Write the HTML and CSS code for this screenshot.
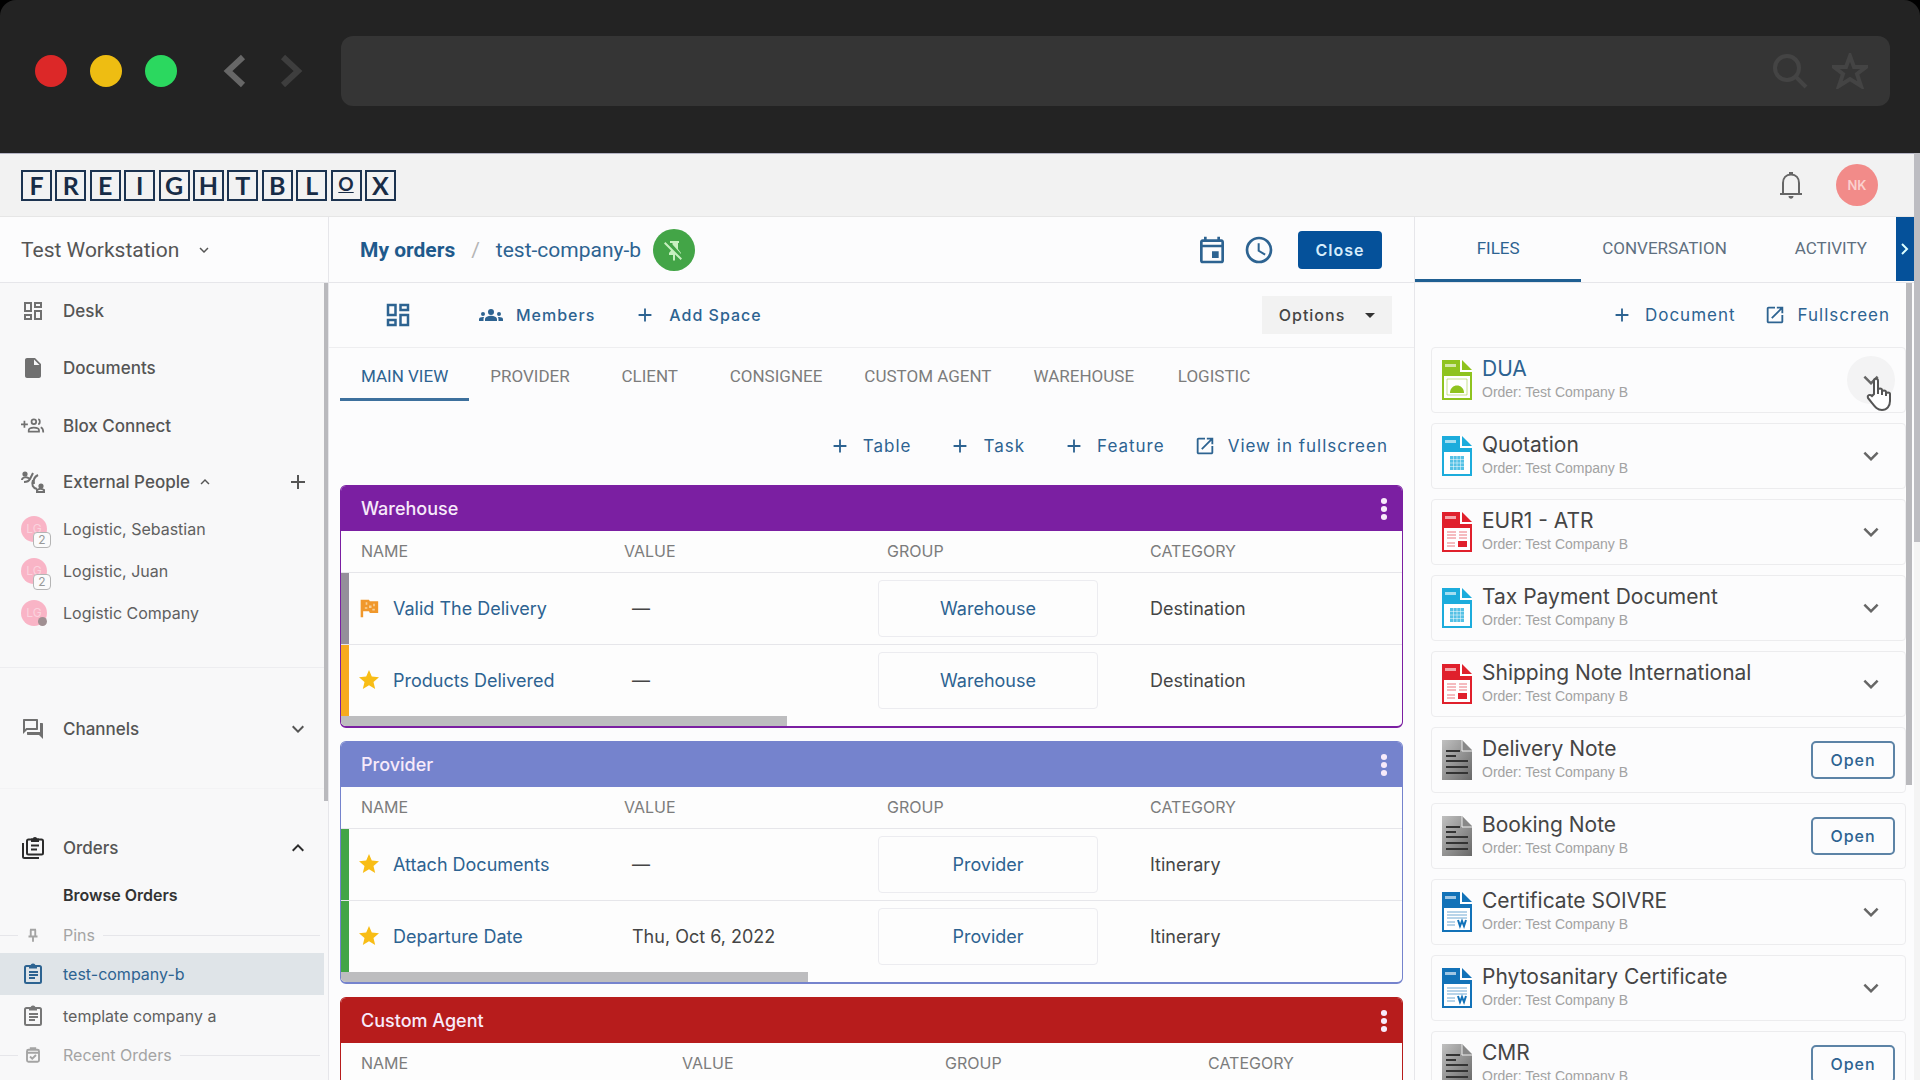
FILE: index.html
```html
<!DOCTYPE html>
<html lang="en">
<head>
<meta charset="utf-8">
<title>Freightblox</title>
<link rel="stylesheet" href="styles.css">
</head>
<body>
<svg class="sprite" aria-hidden="true">
  <symbol id="dashboard" viewBox="0 0 24 24"><path d="M19 5v2h-4V5h4M9 5v6H5V5h4m10 8v6h-4v-6h4M9 17v2H5v-2h4M21 3h-8v6h8V3zM11 3H3v10h8V3zm10 8h-8v10h8V11zm-10 4H3v6h8v-6z"/></symbol>
  <symbol id="file" viewBox="0 0 24 24"><path d="M14 2H6c-1.1 0-2 .9-2 2v16c0 1.100.9 2 2 2h12c1.100 0 2-.9 2-2V8l-6-6zm-1 7V3.500L18.500 9H13z"/></symbol>
  <symbol id="group-add" viewBox="0 0 28 24"><g fill="none" stroke="currentColor" stroke-width="2"><path d="M0 10h8M4 6v8"/><circle cx="15" cy="7" r="2.700"/><path d="M9 18.500v-1.500c0-2 3-3.200 6-3.200s6 1.200 6 3.200v1.500zM20 4.300c2.600 0 2.600 5.400 0 5.400M23 13.500c2 .8 3 2 3 6"/></g></symbol>
  <symbol id="external" viewBox="0 0 24 24"><g fill="none" stroke="currentColor" stroke-width="2"><circle cx="4" cy="4" r="1.600" fill="currentColor"/><path d="M1 10c0-3 5-3.500 7-1.500M12 3l-3 6c-1 2-3 3-6 3M17 5c-4 2-5 5-4 9M12 10c-2 5 0 8 4 9"/><circle cx="20" cy="16" r="1.600" fill="currentColor"/><path d="M16 22h7v-2c-2-1.500-5-1.500-7 0z"/></g></symbol>
  <symbol id="plus" viewBox="0 0 24 24"><path d="M19 13h-6v6h-2v-6H5v-2h6V5h2v6h6v2z"/></symbol>
  <symbol id="chevron-down" viewBox="0 0 24 24"><path d="M7.400 8.600L12 13.200l4.600-4.600L18 10l-6 6-6-6z"/></symbol>
  <symbol id="chevron-up" viewBox="0 0 24 24"><path d="M12 8l-6 6 1.400 1.400 4.600-4.600 4.600 4.600L18 14z"/></symbol>
  <symbol id="forum" viewBox="0 0 24 24"><path d="M15 4v7H5.200L4 12.200V4h11m1-2H3c-.6 0-1 .4-1 1v14l4-4h10c.6 0 1-.4 1-1V3c0-.6-.4-1-1-1zm5 4h-2v9H6v2c0 .6.400 1 1 1h11l4 4V7c0-.6-.4-1-1-1z"/></symbol>
  <symbol id="orders" viewBox="0 0 24 24"><g fill="none" stroke="currentColor" stroke-width="2"><rect x="6" y="3.500" width="16" height="15" rx="1.500"/><path d="M2 7v13.500c0 1 .6 1.500 1.500 1.500H18M10 9.500h8M10 13.500h6"/><path d="M11 5V3.500h1.500a1.500 1.500 0 0 1 3 0H17V5z" fill="currentColor"/></g></symbol>
  <symbol id="clipboard" viewBox="0 0 24 24"><g fill="none" stroke="currentColor" stroke-width="2"><rect x="4" y="4" width="16" height="17" rx="1.500"/><path d="M8 10h9M8 13h9M8 16h6"/><path d="M9 5.500V4h1.500a1.500 1.500 0 0 1 3 0H15v1.500z" fill="currentColor"/></g></symbol>
  <symbol id="recent" viewBox="0 0 24 24"><g fill="none" stroke="currentColor" stroke-width="2.500"><rect x="4" y="5" width="16" height="16" rx="2"/><path d="M4 9h16M9 5V3h6v2M8 14l3 3 5-5"/></g></symbol>
  <symbol id="pin" viewBox="0 0 24 24"><path fill="none" stroke="currentColor" stroke-width="2.500" d="M8 5h8M9 5v8M15 5v8M6 14h12M12 14v7"/></symbol>
  <symbol id="pin-off" viewBox="0 0 24 24"><path d="M8 3h9v2h-1v6l3 4v1l-8.500-9.500V5H8zM3.400 4L2 5.400l7 7L7 15v2h4v5l1 1 1-1v-5.500l5.600 5.500 1.400-1.400z"/></symbol>
  <symbol id="event" viewBox="0 0 24 24"><path d="M19 4h-1V2h-2v2H8V2H6v2H5c-1.100 0-2 .9-2 2v14c0 1.100.9 2 2 2h14c1.100 0 2-.9 2-2V6c0-1.100-.9-2-2-2zm0 16H5V10h14v10zm0-12H5V6h14v2zm-7 5h5v5h-5z"/></symbol>
  <symbol id="clock" viewBox="0 0 24 24"><path d="M12 2a10 10 0 1 0 0 20 10 10 0 0 0 0-20zm0 18a8 8 0 1 1 0-16 8 8 0 0 1 0 16zm.5-13H11v6l5.200 3.100.8-1.200-4.500-2.700z"/></symbol>
  <symbol id="groups" viewBox="0 0 24 24"><path d="M4 13a2 2 0 1 0 0-4 2 2 0 0 0 0 4zm1.100 1.100C4.800 14 4.400 14 4 14c-1 0-1.900.2-2.800.6C.5 14.900 0 15.600 0 16.400V18h4.500v-1.600c0-.8.200-1.600.6-2.300zM20 13a2 2 0 1 0 0-4 2 2 0 0 0 0 4zm4 3.400c0-.8-.5-1.500-1.200-1.800-.9-.4-1.800-.6-2.800-.6-.4 0-.8 0-1.100.1.400.7.600 1.500.6 2.300V18H24zM16.200 13.700c-1.200-.5-2.600-1-4.200-1s-3 .4-4.200 1C6.700 14.100 6 15.200 6 16.400V18h12v-1.600c0-1.200-.7-2.300-1.800-2.700zM9 9a3 3 0 1 0 6 0 3 3 0 0 0-6 0z"/></symbol>
  <symbol id="open-new" viewBox="0 0 24 24"><path d="M19 19H5V5h7V3H5c-1.100 0-2 .9-2 2v14c0 1.100.9 2 2 2h14c1.100 0 2-.9 2-2v-7h-2v7zM14 3v2h3.600l-9.800 9.800 1.400 1.400L19 6.400V10h2V3h-7z"/></symbol>
  <symbol id="kebab" viewBox="0 0 24 24"><circle cx="12" cy="6" r="2.300"/><circle cx="12" cy="12" r="2.300"/><circle cx="12" cy="18" r="2.300"/></symbol>
  <symbol id="star" viewBox="0 0 24 24"><path d="M12 17.300L18.200 21l-1.700-7L22 9.200l-7.200-.6L12 2 9.200 8.600 2 9.200 7.500 14l-1.700 7z"/></symbol>
  <symbol id="flag" viewBox="0 0 24 24"><path d="M2 2h10l1 2h10v14H13l-1-2H5v7H2z"/><path d="M8 5h2v3H8zm4 4h3v3h-3zm5-2h2v3h-2zM7 11h3v2H7zm9 2h3v2h-3z" fill="#f8cf96"/></symbol>
  <symbol id="bell" viewBox="0 0 24 28"><g fill="none" stroke="currentColor" stroke-width="2"><path d="M1 23h22M4 23V12c0-5 3-8.500 8-8.500s8 3.500 8 8.500v11"/></g><path d="M10 1h4v3h-4zM9.500 25h5c0 3.500-5 3.500-5 0z"/></symbol>
  <symbol id="doc-sheet" viewBox="0 0 30 40"><path d="M0 0h20l10 10v6H0z"/><path d="M19 0v11h11" fill="none" stroke="#fff" stroke-width="2"/><path d="M3 4h11v3H3z" fill="#fff" opacity=".6"/><path d="M1 15h28v24H1z" fill="#fff" stroke="currentColor" stroke-width="2"/></symbol>
  <symbol id="doc-image" viewBox="0 0 30 40"><use href="#doc-sheet"/><path d="M5 19h20v16H5z" fill="none" stroke="currentColor" opacity=".5"/><path d="M8 33c0-10 14-10 14 0z"/></symbol>
  <symbol id="doc-grid" viewBox="0 0 30 40"><use href="#doc-sheet"/><path d="M8 20h14v14H8z" opacity=".75"/><path d="M11.500 20v14M15 20v14M18.500 20v14M8 23.500h14M8 27h14M8 30.500h14" stroke="#fff" stroke-width=".5"/></symbol>
  <symbol id="doc-pdf" viewBox="0 0 30 40"><use href="#doc-sheet"/><path d="M5 20h9M5 23h9M5 26h9M17 20h8M17 23h8M17 26h8M5 31h8M5 34h8" stroke="currentColor" opacity=".6"/><path d="M16 29h9v6h-9z"/></symbol>
  <symbol id="doc-word" viewBox="0 0 30 40"><use href="#doc-sheet"/><path d="M5 20h20M5 23h20M5 26h20M5 30h8M5 33h8" stroke="currentColor" opacity=".6"/><path fill="none" stroke="currentColor" stroke-width="2" d="M16 28l2 6 2-5 2 5 2-6"/></symbol>
  <linearGradient id="sheet-grey" x2="1" y2="1"><stop offset="0" stop-color="#c0c0c0"/><stop offset="1" stop-color="#686868"/></linearGradient>
  <symbol id="doc-text" viewBox="0 0 30 40"><path d="M0 0h20l10 10v30H0z" fill="url(#sheet-grey)"/><path d="M20 0v11h10z" fill="#888"/><path d="M20 0v11h10" fill="none" stroke="#eee"/><path d="M4 11h14M4 16h10M4 21h22M4 27h22M4 33h22" stroke="#333" stroke-width="2"/></symbol>
</svg>

<header class="chrome">
  <div class="lights"><i class="light red"></i><i class="light amber"></i><i class="light green"></i></div>
  <div class="nav-arrows">
    <button class="arrow" aria-label="Back"><svg viewBox="0 0 24 34"><path d="M20 3L5 17l15 14"/></svg></button>
    <button class="arrow dim" aria-label="Forward"><svg viewBox="0 0 24 34"><path d="M4 3l15 14L4 31"/></svg></button>
  </div>
  <div class="address">
    <input class="address-input" type="text" aria-label="Address">
    <svg class="address-icon" viewBox="0 0 36 36"><circle cx="15" cy="15" r="12"/><path d="M24 24l10 10"/></svg>
    <svg class="address-icon" viewBox="0 0 36 36"><path d="M18 3l4 11h12l-9 7 4 12-11-7-11 7 4-12-9-7h12z"/></svg>
  </div>
</header>

<div class="viewport">
  <div class="app">
    <header class="topbar">
      <a class="logo" href="#" aria-label="Freightblox"><span>F</span><span>R</span><span>E</span><span>I</span><span>G</span><span>H</span><span>T</span><span>B</span><span>L</span><span class="logo-o"><u>O</u></span><span>X</span></a>
      <div class="account">
        <button class="bell" aria-label="Notifications"><svg><use href="#bell"/></svg></button>
        <button class="avatar-me">NK</button>
      </div>
    </header>

    <div class="columns">
      <aside class="sidebar">
        <button class="workspace">Test Workstation <svg class="icon-s"><use href="#chevron-down"/></svg></button>
        <nav class="side-body">
          <a class="side-item" href="#"><svg class="icon"><use href="#dashboard"/></svg>Desk</a>
          <a class="side-item" href="#"><svg class="icon"><use href="#file"/></svg>Documents</a>
          <a class="side-item" href="#"><svg class="icon"><use href="#group-add"/></svg>Blox Connect</a>
          <div class="side-item people-head"><svg class="icon"><use href="#external"/></svg>External People <svg class="icon-s"><use href="#chevron-up"/></svg><button class="side-action" aria-label="Add person"><svg class="icon"><use href="#plus"/></svg></button></div>
          <ul class="people">
            <li><a class="side-link" href="#"><span class="person">LG<b class="count">2</b></span>Logistic, Sebastian</a></li>
            <li><a class="side-link" href="#"><span class="person">LG<b class="count">2</b></span>Logistic, Juan</a></li>
            <li><a class="side-link" href="#"><span class="person">LG<b class="offline"></b></span>Logistic Company</a></li>
          </ul>
          <section class="side-section channels">
            <div class="side-item"><svg class="icon"><use href="#forum"/></svg>Channels<button class="side-action" aria-label="Expand channels"><svg class="icon"><use href="#chevron-down"/></svg></button></div>
          </section>
          <section class="side-section orders">
            <div class="side-item strong-icons"><svg class="icon"><use href="#orders"/></svg>Orders<button class="side-action" aria-label="Collapse orders"><svg class="icon"><use href="#chevron-up"/></svg></button></div>
            <a class="browse" href="#">Browse Orders</a>
            <div class="side-label"><svg class="icon-s"><use href="#pin"/></svg><span>Pins</span></div>
            <a class="side-link selected" href="#"><svg class="icon"><use href="#clipboard"/></svg>test-company-b</a>
            <a class="side-link" href="#"><svg class="icon"><use href="#clipboard"/></svg>template company a</a>
            <div class="side-label"><svg class="icon-s"><use href="#recent"/></svg><span>Recent Orders</span></div>
          </section>
          <i class="scroll-thumb side-thumb"></i>
        </nav>
      </aside>

      <main class="main">
        <div class="main-head">
          <nav class="crumbs"><a class="crumb-root" href="#">My orders</a><span class="slash">/</span><a href="#">test-company-b</a></nav>
          <button class="unpin" aria-label="Unpin"><svg class="icon"><use href="#pin-off"/></svg></button>
          <div class="head-actions">
            <button aria-label="Calendar"><svg class="icon-l"><use href="#event"/></svg></button>
            <button aria-label="History"><svg class="icon-l"><use href="#clock"/></svg></button>
            <button class="close">Close</button>
          </div>
        </div>
        <div class="toolbar">
          <button class="grid-toggle" aria-label="Dashboard"><svg class="icon-m"><use href="#dashboard"/></svg></button>
          <button class="text-btn"><svg class="icon"><use href="#groups"/></svg>Members</button>
          <button class="text-btn"><svg class="icon-p"><use href="#plus"/></svg>Add Space</button>
          <button class="options">Options <i class="caret"></i></button>
        </div>
        <div class="tabs" role="tablist">
          <button role="tab" class="tab active">MAIN VIEW</button>
          <button role="tab" class="tab">PROVIDER</button>
          <button role="tab" class="tab">CLIENT</button>
          <button role="tab" class="tab">CONSIGNEE</button>
          <button role="tab" class="tab">CUSTOM AGENT</button>
          <button role="tab" class="tab">WAREHOUSE</button>
          <button role="tab" class="tab">LOGISTIC</button>
        </div>
        <div class="view-actions">
          <button class="text-btn"><svg class="icon-p"><use href="#plus"/></svg>Table</button>
          <button class="text-btn"><svg class="icon-p"><use href="#plus"/></svg>Task</button>
          <button class="text-btn"><svg class="icon-p"><use href="#plus"/></svg>Feature</button>
          <button class="text-btn tight"><svg class="icon-p"><use href="#open-new"/></svg>View in fullscreen</button>
        </div>

        <div class="boards">
          <section class="board purple">
            <header class="board-head"><h2>Warehouse</h2><button aria-label="Warehouse menu"><svg class="icon-l"><use href="#kebab"/></svg></button></header>
            <div class="board-scroll">
              <table class="grid">
                <thead><tr><th class="c-name">NAME</th><th>VALUE</th><th>GROUP</th><th>CATEGORY</th></tr></thead>
                <tbody>
                  <tr class="st-grey"><td><a class="task" href="#"><svg class="icon flag"><use href="#flag"/></svg>Valid The Delivery</a></td><td class="value">—</td><td><button class="group">Warehouse</button></td><td>Destination</td></tr>
                  <tr class="st-amber"><td><a class="task" href="#"><svg class="icon star"><use href="#star"/></svg>Products Delivered</a></td><td class="value">—</td><td><button class="group">Warehouse</button></td><td>Destination</td></tr>
                </tbody>
              </table>
            </div>
            <i class="hbar" style="width:42%"></i>
          </section>
          <section class="board blue">
            <header class="board-head"><h2>Provider</h2><button aria-label="Provider menu"><svg class="icon-l"><use href="#kebab"/></svg></button></header>
            <div class="board-scroll">
              <table class="grid">
                <thead><tr><th class="c-name">NAME</th><th>VALUE</th><th>GROUP</th><th>CATEGORY</th></tr></thead>
                <tbody>
                  <tr class="st-green"><td><a class="task" href="#"><svg class="icon star"><use href="#star"/></svg>Attach Documents</a></td><td class="value">—</td><td><button class="group">Provider</button></td><td>Itinerary</td></tr>
                  <tr class="st-green"><td><a class="task" href="#"><svg class="icon star"><use href="#star"/></svg>Departure Date</a></td><td class="value">Thu, Oct 6, 2022</td><td><button class="group">Provider</button></td><td>Itinerary</td></tr>
                </tbody>
              </table>
            </div>
            <i class="hbar" style="width:44%"></i>
          </section>
          <section class="board red-board">
            <header class="board-head"><h2>Custom Agent</h2><button aria-label="Custom Agent menu"><svg class="icon-l"><use href="#kebab"/></svg></button></header>
            <div class="board-scroll">
              <table class="grid">
                <thead><tr><th class="c-name wide">NAME</th><th>VALUE</th><th>GROUP</th><th>CATEGORY</th></tr></thead>
              </table>
            </div>
          </section>
        </div>
      </main>

      <aside class="panel">
        <div class="panel-tabs" role="tablist">
          <button role="tab" class="ptab active">FILES</button>
          <button role="tab" class="ptab">CONVERSATION</button>
          <button role="tab" class="ptab">ACTIVITY</button>
          <button class="collapse" aria-label="Collapse panel"><svg viewBox="0 0 10 14"><path d="M2 2l5 5-5 5"/></svg></button>
        </div>
        <div class="panel-body">
          <div class="panel-actions">
            <button class="text-btn"><svg class="icon-p"><use href="#plus"/></svg>Document</button>
            <button class="text-btn tight"><svg class="icon-p"><use href="#open-new"/></svg>Fullscreen</button>
          </div>
          <ul class="files">
            <li class="file hovered"><svg class="doc lime"><use href="#doc-image"/></svg><div class="file-text"><h3>DUA</h3><p>Order: Test Company B</p></div><button class="expand hover" aria-label="Expand"><svg class="icon-m"><use href="#chevron-down"/></svg><svg class="pointer" viewBox="0 0 30 34"><path d="M9 17V4c0-3 4-3 4 0v9c0-2 4-2 4 0v2c0-2 4-2 4 0v2c0-2 4-2 4 0v7c0 5-3 9-8 9-6 0-8-5-14-12-1-3 2-4 4-2z"/><path d="M13 13v4M17 14v4M21 15v4"/></svg></button></li>
            <li class="file"><svg class="doc cyan"><use href="#doc-grid"/></svg><div class="file-text"><h3>Quotation</h3><p>Order: Test Company B</p></div><button class="expand" aria-label="Expand"><svg class="icon-m"><use href="#chevron-down"/></svg></button></li>
            <li class="file"><svg class="doc pdf"><use href="#doc-pdf"/></svg><div class="file-text"><h3>EUR1 - ATR</h3><p>Order: Test Company B</p></div><button class="expand" aria-label="Expand"><svg class="icon-m"><use href="#chevron-down"/></svg></button></li>
            <li class="file"><svg class="doc cyan"><use href="#doc-grid"/></svg><div class="file-text"><h3>Tax Payment Document</h3><p>Order: Test Company B</p></div><button class="expand" aria-label="Expand"><svg class="icon-m"><use href="#chevron-down"/></svg></button></li>
            <li class="file"><svg class="doc pdf"><use href="#doc-pdf"/></svg><div class="file-text"><h3>Shipping Note International</h3><p>Order: Test Company B</p></div><button class="expand" aria-label="Expand"><svg class="icon-m"><use href="#chevron-down"/></svg></button></li>
            <li class="file"><svg class="doc"><use href="#doc-text"/></svg><div class="file-text"><h3>Delivery Note</h3><p>Order: Test Company B</p></div><button class="open">Open</button></li>
            <li class="file"><svg class="doc"><use href="#doc-text"/></svg><div class="file-text"><h3>Booking Note</h3><p>Order: Test Company B</p></div><button class="open">Open</button></li>
            <li class="file"><svg class="doc word"><use href="#doc-word"/></svg><div class="file-text"><h3>Certificate SOIVRE</h3><p>Order: Test Company B</p></div><button class="expand" aria-label="Expand"><svg class="icon-m"><use href="#chevron-down"/></svg></button></li>
            <li class="file"><svg class="doc word"><use href="#doc-word"/></svg><div class="file-text"><h3>Phytosanitary Certificate</h3><p>Order: Test Company B</p></div><button class="expand" aria-label="Expand"><svg class="icon-m"><use href="#chevron-down"/></svg></button></li>
            <li class="file"><svg class="doc"><use href="#doc-text"/></svg><div class="file-text"><h3>CMR</h3><p>Order: Test Company B</p></div><button class="open">Open</button></li>
          </ul>
          <i class="scroll-thumb panel-thumb"></i>
        </div>
      </aside>
    </div>
  </div>
  <div class="page-scroll"><i></i></div>
</div>
</body>
</html>
```
FILE: styles.css
```css
:root {
  --blue: #2d6391;
  --ink: #454545;
  --muted: #7c7c7c;
  --line: #e6e6ea;
  --paper: #fcfcfd;
}
* { box-sizing: border-box; }
body {
  margin: 0;
  height: 100vh;
  display: flex;
  flex-direction: column;
  overflow: hidden;
  background: #000;
  color: var(--ink);
  font-family: Inter, "Liberation Sans", sans-serif;
  font-size: 16px;
}
button, input { font: inherit; color: inherit; border: 0; background: none; padding: 0; margin: 0; }
a { color: inherit; text-decoration: none; }
ul { list-style: none; margin: 0; padding: 0; }
h2, h3, p { margin: 0; font-weight: 400; }
svg { fill: currentColor; display: block; flex: none; }
button { display: flex; align-items: center; justify-content: center; }
.sprite { position: absolute; width: 0; height: 0; }
.icon { width: 24px; height: 24px; }
.icon-s { width: 18px; height: 18px; }
.icon-p { width: 22px; height: 22px; }
.icon-m { width: 30px; height: 30px; }
.icon-l { width: 32px; height: 32px; }

/* Browser frame */
.chrome {
  flex: none;
  display: flex;
  align-items: center;
  height: 153px;
  padding: 0 30px 12px 35px;
  background: #232323;
  border-radius: 16px 16px 0 0;
}
.lights { display: flex; gap: 23px; }
.light { width: 32px; height: 32px; border-radius: 50%; }
.red { background: #dc2828; }
.amber { background: #eebd12; }
.green { background: #2bd85f; }
.nav-arrows { display: flex; gap: 32px; margin: 0 38px 0 46px; }
.arrow { color: #676767; }
.arrow.dim { color: #3e3e3e; }
.arrow svg { width: 24px; height: 34px; fill: none; stroke: currentColor; stroke-width: 6; }
.address {
  flex: 1;
  display: flex;
  align-items: center;
  gap: 24px;
  height: 70px;
  padding: 0 22px;
  border-radius: 12px;
  background: #353535;
}
.address-input { flex: 1; min-width: 0; height: 100%; color: #ccc; }
.address-icon { width: 36px; height: 36px; fill: none; stroke: #444; stroke-width: 4; }

/* App shell */
.viewport { flex: 1; min-height: 0; display: flex; }
.app { flex: 1; min-width: 0; display: flex; flex-direction: column; background: var(--paper); }
.page-scroll { width: 6px; background: #f4f4f4; }
.page-scroll i { display: block; height: 42%; background: #bdbdc2; }
.topbar {
  flex: none;
  display: flex;
  align-items: center;
  justify-content: space-between;
  height: 64px;
  padding: 0 36px 0 21px;
  background: #f2f2f2;
  border-top: 1px solid #b4b4c4;
  border-bottom: 1px solid #e6e6e6;
}
.logo { display: flex; justify-content: space-between; width: 375px; }
.logo span {
  width: 31px;
  height: 31px;
  border: 2px solid #1c3350;
  color: #182c46;
  font: 700 25px/27px Lato, sans-serif;
  text-align: center;
}
.logo .logo-o { font-size: 19px; line-height: 23px; }
.account { display: flex; align-items: center; gap: 33px; }
.bell svg { width: 24px; height: 28px; color: #666; }
.avatar-me {
  width: 42px;
  height: 42px;
  border-radius: 50%;
  background: #f28b89;
  color: #fbd0ce;
  font-size: 13px;
  font-weight: 600;
}
.columns { flex: 1; min-height: 0; display: flex; }

/* Sidebar */
.sidebar { width: 329px; flex: none; display: flex; flex-direction: column; border-right: 1px solid var(--line); }
.workspace {
  flex: none;
  justify-content: flex-start;
  gap: 16px;
  height: 66px;
  padding: 0 21px;
  border-bottom: 1px solid var(--line);
  font: 400 21px/26px Roboto, sans-serif;
  color: #555;
}
.side-body { position: relative; flex: 1; min-height: 0; overflow: hidden; background: #f8f8f9; }
.side-item { display: flex; align-items: center; height: 58px; padding: 0 18px 0 21px; font-size: 17px; font-weight: 500; color: #555; }
.side-body > .side-item:first-child { height: 56px; }
.side-item > .icon { margin-right: 18px; color: #707070; }
.side-item > .icon-s { margin-left: 6px; }
.side-action { margin-left: auto; }
.side-body > .people-head { height: 53px; }
.side-link { display: flex; align-items: center; height: 42px; padding-left: 21px; font-size: 16px; color: #606060; }
.side-link > .icon { margin-right: 18px; color: #777; }
.people { padding-bottom: 33px; }
.person {
  position: relative;
  width: 26px;
  height: 26px;
  margin-right: 16px;
  border-radius: 50%;
  background: #f9b4c6;
  color: #fbd3de;
  font-size: 12px;
  line-height: 26px;
  text-align: center;
}
.count {
  position: absolute;
  left: 12px;
  top: 16px;
  width: 18px;
  height: 16px;
  border: 1px solid #b5b5b5;
  border-radius: 4px;
  background: #fbfbfb;
  color: #999;
  font-size: 12px;
  font-weight: 400;
  line-height: 14px;
}
.offline { position: absolute; right: 0; bottom: 0; width: 9px; height: 9px; border-radius: 50%; background: #a08f92; }
.side-section { border-top: 1px solid #ededf0; }
.channels { padding: 32px 0 30px; }
.orders { padding-top: 34px; border-color: #f3f3f5; }
.orders .side-item { height: 50px; }
.strong-icons svg, .side-item.strong-icons > .icon { color: #2c2c2c; }
.browse { display: flex; align-items: center; height: 44px; padding-left: 63px; font-size: 16px; font-weight: 600; color: #333; }
.side-label { display: flex; align-items: center; height: 36px; font-size: 16px; color: #a4a4a4; }
.side-label::before { content: ""; width: 18px; height: 1px; margin-right: 6px; background: var(--line); }
.side-label::after { content: ""; flex: 1; height: 1px; margin: 0 8px; background: var(--line); }
.side-label span { margin-left: 21px; }
.selected, .selected > .icon { color: var(--blue); }
.selected { background: #dfe4e8; margin-right: 4px; }
.scroll-thumb { position: absolute; right: 0; top: 0; background: #b9b9bd; }
.side-thumb { width: 4px; height: 65%; }

/* Main column */
.main { flex: 1; min-width: 0; display: flex; flex-direction: column; }
.main-head { flex: none; display: flex; align-items: center; height: 66px; padding: 0 32px 0 31px; border-bottom: 1px solid var(--line); color: var(--blue); }
.crumbs { display: flex; gap: 16px; font: 400 21px/26px Roboto, sans-serif; }
.crumb-root { font-weight: 700; color: #1f5a8c; }
.slash { color: #b5b5b5; }
.unpin { width: 42px; height: 42px; margin-left: 12px; border-radius: 50%; background: #43a547; color: #c8f0c0; }
.head-actions { display: flex; align-items: center; gap: 15px; margin-left: auto; }
.close { width: 84px; height: 38px; margin-left: 8px; border-radius: 4px; background: #05519a; color: #d6ecfa; font-weight: 600; letter-spacing: 1px; }
.toolbar { flex: none; display: flex; align-items: center; height: 65px; padding: 0 22px 0 54px; border-bottom: 1px solid #eeeef0; }
.text-btn { gap: 12px; font-size: 17px; letter-spacing: 1px; color: var(--blue); }
.grid-toggle { margin-right: 66px; color: var(--blue); }
.toolbar .text-btn { gap: 13px; font-size: 16px; font-weight: 500; }
.toolbar .text-btn + .text-btn { margin-left: 39px; }
.options { gap: 20px; height: 38px; width: 130px; margin-left: auto; background: #f2f2f2; font-weight: 500; letter-spacing: 1px; }
.caret { border: 5px solid transparent; border-top-color: #333; border-bottom: 0; }
.tabs { flex: none; display: flex; height: 53px; padding-left: 11px; }
.tab { min-width: 118px; padding: 5px 21px 0; border-bottom: 3px solid transparent; font: 400 17px/20px Roboto, sans-serif; color: var(--muted); }
.tab.active { color: var(--blue); border-color: #3d709d; }
.view-actions { flex: none; display: flex; justify-content: flex-end; gap: 38px; padding: 34px 26px 28px; }
.view-actions .text-btn { height: 22px; }
.view-actions .tight { margin-left: -9px; }
.boards { display: flex; flex-direction: column; gap: 13px; padding: 0 11px; }
.board { --accent: #7b1fa2; flex: none; border: 1px solid var(--accent); border-bottom-width: 2px; border-radius: 6px; overflow: hidden; background: #fdfdfd; }
.blue { --accent: #7583cd; }
.red-board { --accent: #b71c1c; }
.board-head { display: flex; align-items: center; justify-content: space-between; height: 45px; padding: 0 2px 0 20px; background: var(--accent); color: #f7eafa; }
.board-head h2 { font-size: 18px; font-weight: 500; }
.board-scroll { overflow: hidden; }
.grid { width: 100%; table-layout: fixed; border-collapse: separate; border-spacing: 0; font-size: 18px; }
.grid th { width: 263px; height: 41px; padding: 0 9px 1px; font-size: 16px; font-weight: 400; color: var(--muted); text-align: left; }
.grid th.c-name { width: 274px; padding-left: 20px; }
.grid th.wide { width: 332px; }
.grid td { height: 72px; padding: 0 9px 1px; border-top: 1px solid var(--line); }
.grid td:first-child { padding-left: 10px; box-shadow: inset 8px 0 var(--status); }
.grid td:nth-child(3) { padding: 0; }
.st-grey { --status: #948f9a; }
.st-amber { --status: #f7ab1d; }
.st-green { --status: #43a547; }
.grid td.value { padding-left: 17px; }
.task { display: flex; align-items: center; gap: 12px; padding-left: 6px; color: var(--blue); }
.flag { color: #f0982c; width: 20px; height: 20px; margin: 0 2px; }
.star { color: #f8bd16; }
.group { width: 220px; height: 57px; border: 1px solid #ececf0; border-radius: 4px; color: var(--blue); }
.hbar { display: block; height: 10px; background: #bdbdbf; }

/* Files panel */
.panel { width: 500px; flex: none; display: flex; flex-direction: column; border-left: 1px solid var(--line); }
.panel-tabs { position: relative; flex: none; display: flex; height: 66px; border-bottom: 1px solid var(--line); }
.ptab { flex: 1 0 0; border-bottom: 3px solid transparent; font: 400 17px/20px Roboto, sans-serif; color: #5f7080; }
.ptab.active { border-color: #1f5f92; color: var(--blue); }
.collapse { position: absolute; right: 0; top: 0; width: 18px; height: 64px; background: #05519a; }
.collapse svg { width: 10px; height: 14px; fill: none; stroke: #dff; stroke-width: 2; }
.panel-body { position: relative; flex: 1; min-height: 0; overflow: hidden; padding: 0 8px 0 16px; }
.panel-thumb { width: 6px; height: 63%; right: 2px; }
.panel-actions { display: flex; align-items: center; justify-content: flex-end; gap: 28px; height: 64px; padding-right: 16px; }
.files { display: flex; flex-direction: column; gap: 10px; }
.file { display: flex; align-items: flex-start; height: 66px; padding: 8px 10px 0 10px; border: 1px solid #ececee; border-radius: 4px; }
.doc { width: 30px; height: 40px; margin: 4px 10px 0 0; }
.lime { color: #8fc31f; }
.cyan { color: #1cacdc; }
.pdf { color: #e0202c; }
.word { color: #1272b8; }
.file-text { flex: 1; min-width: 0; }
.file h3 { font-size: 21px; line-height: 25px; }
.file p { font: 400 14px/23px "Liberation Sans", sans-serif; color: #a2a2a2; }
.hovered h3 { color: var(--blue); }
.expand { position: relative; width: 48px; height: 48px; border-radius: 50%; color: #666; }
.expand.hover { background: #f3f3f4; }
.pointer { position: absolute; left: 18px; top: 20px; width: 30px; height: 36px; fill: #fff; stroke: #555; stroke-width: 2; }
.open { width: 84px; height: 38px; margin: 5px 0 0; border: 2px solid #5c83a6; border-radius: 5px; color: var(--blue); font-weight: 500; letter-spacing: 1px; }
```
